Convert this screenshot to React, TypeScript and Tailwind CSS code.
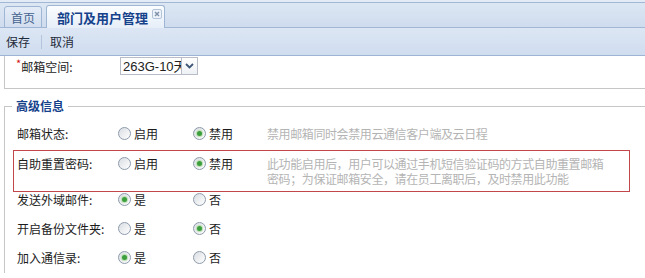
import React from "react";

function Radio({ checked }: { checked: boolean }) {
  return (
    <span className="inline-flex h-[13px] w-[13px] shrink-0 items-center justify-center rounded-full border border-[#8e9bab] bg-gradient-to-br from-[#d9dde2] to-white">
      {checked && <span className="h-[5px] w-[5px] rounded-full bg-[#3d9e3d] shadow-[0_0_1px_1px_#b9deb0]" />}
    </span>
  );
}

function Opt({ checked, text, w }: { checked: boolean; text: string; w: string }) {
  return (
    <div className={`flex h-[15px] items-center gap-[3px] ${w}`}>
      <Radio checked={checked} />
      <span>{text}</span>
    </div>
  );
}

function Row({
  label,
  a,
  b,
  sel,
  help,
  cls,
}: {
  label: string;
  a: string;
  b: string;
  sel: number;
  help?: string;
  cls: string;
}) {
  return (
    <div className={`flex items-center pl-[12px] ${cls}`}>
      <div className="w-[101px]">{label}</div>
      <Opt checked={sel === 0} text={a} w="w-[75px]" />
      <Opt checked={sel === 1} text={b} w="w-[74px]" />
      {help && <div className="tracking-[-0.4px] text-[#b4b4b4]">{help}</div>}
    </div>
  );
}

export default function App() {
  return (
    <div className="relative h-[278px] w-[645px] overflow-hidden bg-white font-['Noto_Sans_CJK_SC',sans-serif] text-[12px] leading-[15px] text-[#1c1c1c]">
      {/* tab strip */}
      <div className="h-[28px] bg-[#e3ebf6] pt-[2px]">
        <div className="flex h-[26px] items-end gap-[4px] border-t border-b border-[#a2b7d4] bg-gradient-to-b from-[#dde7f4] to-[#cfdcee] pl-[4px]">
          <div className="mb-[-1px] flex h-[22px] w-[38px] items-center justify-center rounded-t-[3px] border border-[#9fb5d4] bg-gradient-to-b from-[#e4ecf7] to-[#d2deef] text-[#44628f]">
            首页
          </div>
          <div className="mb-[-1px] flex h-[23px] w-[119px] items-center rounded-t-[3px] border border-b-0 border-[#9fb5d4] bg-gradient-to-b from-[#fbfdff] to-[#e6eef8] pl-[10px]">
            <span className="text-[13px] font-bold text-[#15428b]">部门及用户管理</span>
            <span className="ml-[4px] mt-[-6px] flex h-[10px] w-[10px] items-center justify-center rounded-[2px] border border-[#b3c3da] bg-[#eef3f9]">
              <svg width="6" height="6" viewBox="0 0 6 6">
                <path d="M1 1 L5 5 M5 1 L1 5" stroke="#7d8fa9" strokeWidth="1.4" />
              </svg>
            </span>
          </div>
        </div>
      </div>

      {/* toolbar */}
      <div className="flex h-[28px] items-center border-b border-[#9db4d4] bg-gradient-to-b from-[#dce6f4] to-[#d0ddef] text-[#1e2a3a]">
        <span className="ml-[6px]">保存</span>
        <span className="ml-[11px] h-[14px] w-px bg-[#b3c4dc]" />
        <span className="ml-[8px]">取消</span>
      </div>

      {/* top block */}
      <div className="ml-[4px] flex h-[33px] items-start border-b border-l border-[#c6c6c6] pt-[1px]">
        <div className="flex h-[18px] w-[115px] items-center pl-[11px]">
          <span className="mt-[-5px] text-[11px] text-[#d01010]">*</span>
          <span>邮箱空间:</span>
        </div>
        <div className="flex h-[18px] w-[62px] items-center overflow-hidden whitespace-nowrap border border-[#b8bcc6] pl-[2px] font-['Liberation_Sans','Noto_Sans_CJK_SC',sans-serif] text-[13px] text-[#222]">
          263G-10天
        </div>
        <div className="flex h-[18px] w-[16px] items-center justify-center border border-l-0 border-[#b8bcc6] bg-gradient-to-b from-white to-[#eef1f5]">
          <svg width="9" height="6" viewBox="0 0 9 6">
            <path d="M1 1 L4.5 4.5 L8 1" stroke="#3e5777" strokeWidth="1.8" fill="none" />
          </svg>
        </div>
      </div>

      {/* advanced fieldset */}
      <fieldset className="ml-[4px] mr-[-20px] mt-[9px] border border-b-0 border-[#c6c6c6] pb-[8px]">
        <legend className="ml-[7px] px-[4px] text-[12px] font-bold leading-[16px] text-[#15428b]">高级信息</legend>
        <Row
          label="邮箱状态:"
          a="启用"
          b="禁用"
          sel={1}
          help="禁用邮箱同时会禁用云通信客户端及云日程"
          cls="mt-[7px] h-[24px]"
        />
        <div className="ml-[8px] mt-[5px] flex w-[617px] items-start border border-[#c2474a] pb-[5px] pl-[3px] pt-[5px]">
          <div className="w-[101px]">自助重置密码:</div>
          <Opt checked={false} text="启用" w="w-[75px]" />
          <Opt checked={true} text="禁用" w="w-[74px]" />
          <div className="w-[345px] tracking-[-0.4px] text-[#b4b4b4]">
            此功能启用后，用户可以通过手机短信验证码的方式自助重置邮箱密码；为保证邮箱安全，请在员工离职后，及时禁用此功能
          </div>
        </div>
        <Row label="发送外域邮件:" a="是" b="否" sel={0} cls="h-[15px]" />
        <Row label="开启备份文件夹:" a="是" b="否" sel={1} cls="mt-[14px] h-[15px]" />
        <Row label="加入通信录:" a="是" b="否" sel={0} cls="mt-[14px] h-[15px]" />
      </fieldset>
    </div>
  );
}
